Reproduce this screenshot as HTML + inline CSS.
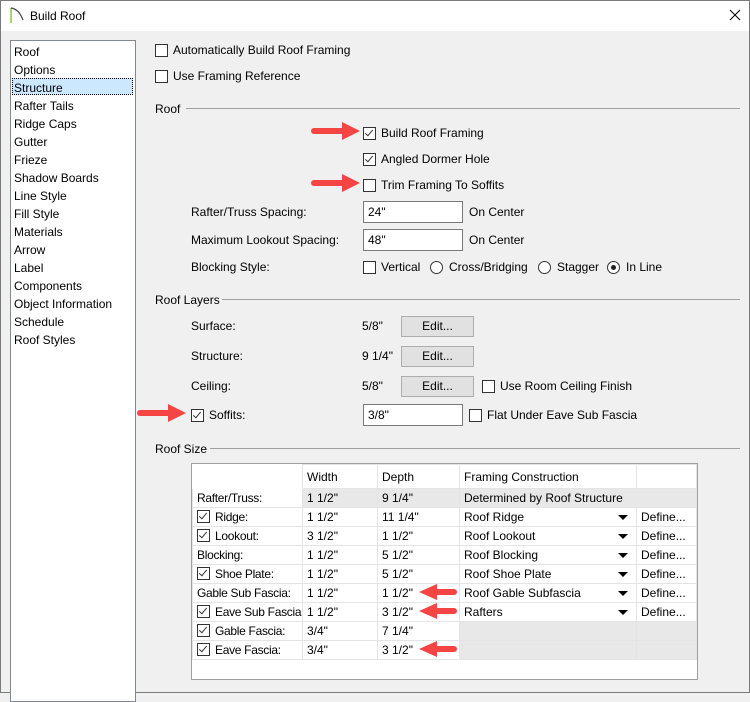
<!DOCTYPE html><html><head><style>
body{margin:0;width:750px;height:693px;overflow:hidden;background:#f0f0f0;font-family:"Liberation Sans",sans-serif;font-size:12px;color:#000;position:relative}
.a{position:absolute;white-space:nowrap;line-height:14px}
.cb{position:absolute;width:11px;height:11px;border:1px solid #333;background:#fff}
.cb.c::after{content:"";position:absolute;left:3px;top:0px;width:3px;height:7px;border:solid #333;border-width:0 1.3px 1.3px 0;transform:rotate(40deg)}
.rd{position:absolute;width:11px;height:11px;border:1px solid #333;border-radius:50%;background:#fff}
.rd.c::after{content:"";position:absolute;left:3px;top:3px;width:5px;height:5px;border-radius:50%;background:#222}
.in{position:absolute;background:#fff;border:1px solid #7a7a7a;box-sizing:border-box;height:22px;width:100px;padding:3px 0 0 4px}
.bt{position:absolute;background:#e1e1e1;border:1px solid #adadad;box-sizing:border-box;width:73px;height:21px;text-align:center;line-height:19px}
.ln{position:absolute;height:1px;background:#a0a0a0;right:10px}
table{position:absolute;left:192px;top:464px;border-collapse:collapse;background:#fff;table-layout:fixed;width:504px}
td{border:1px solid #e4e4e4;height:19px;padding:0 0 0 4px;line-height:18px;white-space:nowrap;position:relative;box-sizing:border-box;overflow:hidden}
tr td:first-child{letter-spacing:-0.3px}
td.g{background:#e8e8e8}
.tri{position:absolute;right:8px;top:7px;border:5px solid transparent;border-top:5px solid #000;border-bottom:0}
td .cb{position:relative;display:inline-block;vertical-align:-2px;margin-right:5px}
</style></head><body>
<div style="position:absolute;left:0;top:0;width:750px;height:31px;background:#fff"></div>
<div style="position:absolute;left:0;top:0;width:748px;height:691px;border:1px solid #7a7a7a"></div>
<svg style="position:absolute;left:9px;top:6px" width="16" height="18"><path d="M2 2 V17" stroke="#8cc63f" stroke-width="1.5"/><path d="M2 2 Q10 3 14 14" stroke="#444" stroke-width="1.2" fill="none"/></svg>
<div class="a" style="left:30px;top:9px">Build Roof</div>
<svg style="position:absolute;left:729px;top:9px" width="12" height="12"><path d="M1 1L11 11M11 1L1 11" stroke="#000" stroke-width="1"/></svg>
<div style="position:absolute;left:10px;top:40px;width:124px;height:660px;background:#fff;border:1px solid #828790"></div>
<div style="position:absolute;left:12px;top:78px;width:121px;height:17px;background:#cce8ff;border:1px dotted #000;box-sizing:border-box"></div>
<div class="a" style="left:14px;top:43px;line-height:18px">Roof<br>Options<br>Structure<br>Rafter Tails<br>Ridge Caps<br>Gutter<br>Frieze<br>Shadow Boards<br>Line Style<br>Fill Style<br>Materials<br>Arrow<br>Label<br>Components<br>Object Information<br>Schedule<br>Roof Styles</div>
<div class="cb" style="left:155px;top:44px"></div><div class="a" style="left:173px;top:43px">Automatically Build Roof Framing</div>
<div class="cb" style="left:155px;top:70px"></div><div class="a" style="left:173px;top:69px">Use Framing Reference</div>
<div class="a" style="left:155px;top:102px">Roof</div><div class="ln" style="left:186px;top:108px"></div>
<div class="cb c" style="left:363px;top:127px"></div><div class="a" style="left:381px;top:126px">Build Roof Framing</div>
<div class="cb c" style="left:363px;top:153px"></div><div class="a" style="left:381px;top:152px">Angled Dormer Hole</div>
<div class="cb" style="left:363px;top:179px"></div><div class="a" style="left:381px;top:178px">Trim Framing To Soffits</div>
<div class="a" style="left:191px;top:205px">Rafter/Truss Spacing:</div><div class="in" style="left:363px;top:201px">24"</div><div class="a" style="left:469px;top:205px">On Center</div>
<div class="a" style="left:191px;top:233px">Maximum Lookout Spacing:</div><div class="in" style="left:363px;top:229px">48"</div><div class="a" style="left:469px;top:233px">On Center</div>
<div class="a" style="left:191px;top:260px">Blocking Style:</div>
<div class="cb" style="left:363px;top:261px"></div><div class="a" style="left:381px;top:260px">Vertical</div>
<div class="rd" style="left:430px;top:261px"></div><div class="a" style="left:449px;top:260px">Cross/Bridging</div>
<div class="rd" style="left:538px;top:261px"></div><div class="a" style="left:557px;top:260px">Stagger</div>
<div class="rd c" style="left:607px;top:261px"></div><div class="a" style="left:626px;top:260px">In Line</div>
<div class="a" style="left:155px;top:293px">Roof Layers</div><div class="ln" style="left:222px;top:299px"></div>
<div class="a" style="left:191px;top:319px">Surface:</div><div class="a" style="left:362px;top:319px">5/8"</div><div class="bt" style="left:401px;top:316px">Edit...</div>
<div class="a" style="left:191px;top:349px">Structure:</div><div class="a" style="left:362px;top:349px">9 1/4"</div><div class="bt" style="left:401px;top:346px">Edit...</div>
<div class="a" style="left:191px;top:379px">Ceiling:</div><div class="a" style="left:362px;top:379px">5/8"</div><div class="bt" style="left:401px;top:376px">Edit...</div>
<div class="cb" style="left:482px;top:380px"></div><div class="a" style="left:500px;top:379px">Use Room Ceiling Finish</div>
<div class="cb c" style="left:191px;top:409px"></div><div class="a" style="left:209px;top:408px">Soffits:</div>
<div class="in" style="left:363px;top:404px">3/8"</div>
<div class="cb" style="left:469px;top:409px"></div><div class="a" style="left:487px;top:408px">Flat Under Eave Sub Fascia</div>
<div class="a" style="left:155px;top:442px">Roof Size</div><div class="ln" style="left:210px;top:448px"></div>
<div style="position:absolute;left:191px;top:463px;width:507px;height:217px;background:#fff;border:1px solid #a0a0a0;box-sizing:border-box"></div>
<table>
<colgroup><col style="width:110px"><col style="width:75px"><col style="width:82px"><col style="width:177px"><col style="width:60px"></colgroup>
<tr><td style="border-color:#fff;border-right-color:#e4e4e4;height:24px"></td><td style="height:24px">Width</td><td>Depth</td><td>Framing Construction</td><td></td></tr>
<tr><td>Rafter/Truss:</td><td class="g">1 1/2"</td><td class="g">9 1/4"</td><td class="g" colspan="2">Determined by Roof Structure</td></tr>
<tr><td><span class="cb c"></span>Ridge:</td><td>1 1/2"</td><td>11 1/4"</td><td>Roof Ridge<span class="tri"></span></td><td>Define...</td></tr>
<tr><td><span class="cb c"></span>Lookout:</td><td>3 1/2"</td><td>1 1/2"</td><td>Roof Lookout<span class="tri"></span></td><td>Define...</td></tr>
<tr><td>Blocking:</td><td>1 1/2"</td><td>5 1/2"</td><td>Roof Blocking<span class="tri"></span></td><td>Define...</td></tr>
<tr><td><span class="cb c"></span>Shoe Plate:</td><td>1 1/2"</td><td>5 1/2"</td><td>Roof Shoe Plate<span class="tri"></span></td><td>Define...</td></tr>
<tr><td>Gable Sub Fascia:</td><td>1 1/2"</td><td>1 1/2"</td><td>Roof Gable Subfascia<span class="tri"></span></td><td>Define...</td></tr>
<tr><td><span class="cb c"></span>Eave Sub Fascia:</td><td>1 1/2"</td><td>3 1/2"</td><td>Rafters<span class="tri"></span></td><td>Define...</td></tr>
<tr><td><span class="cb c"></span>Gable Fascia:</td><td>3/4"</td><td>7 1/4"</td><td class="g"></td><td class="g"></td></tr>
<tr><td><span class="cb c"></span>Eave Fascia:</td><td>3/4"</td><td>3 1/2"</td><td class="g"></td><td class="g"></td></tr>
</table>
<svg style="position:absolute;left:0;top:0" width="750" height="693">
<g fill="#f44444" stroke="#f44444" stroke-linecap="round">
<path d="M314 131H344" stroke-width="6"/><path d="M342 122L360 131L342 140Z" stroke="none"/>
<path d="M314 183H344" stroke-width="6"/><path d="M342 174L360 183L342 192Z" stroke="none"/>
<path d="M140 413H170" stroke-width="6"/><path d="M168 404L186 413L168 422Z" stroke="none"/>
<path d="M437 592H454" stroke-width="6"/><path d="M437 584L419 592L437 600Z" stroke="none"/>
<path d="M437 611H454" stroke-width="6"/><path d="M437 603L419 611L437 619Z" stroke="none"/>
<path d="M437 649H454" stroke-width="6"/><path d="M437 641L419 649L437 657Z" stroke="none"/>
</g></svg>
</body></html>
